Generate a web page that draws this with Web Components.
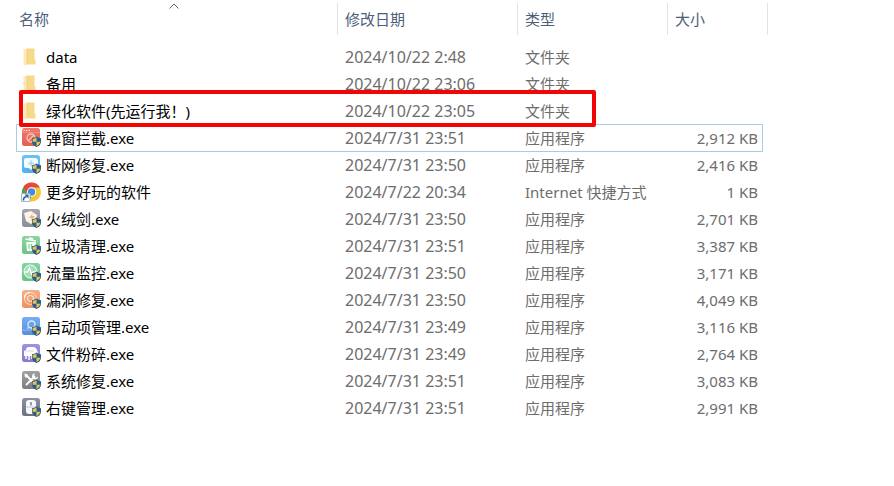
<!DOCTYPE html>
<html lang="zh-CN">
<head>
<meta charset="utf-8">
<meta name="viewport" content="width=device-width, initial-scale=1">
<title>文件列表</title>
<style>
    body {
        margin: 0;
        background: #fff;
        color: #6d6d6d;
        font: 15px/20px "Noto Sans", "Noto Sans CJK SC", sans-serif;
    }
</style>
</head>
<body>
<file-list></file-list>

<script>
const shield = `
    <path d="M10 10.200q2.500 0 4.500-1.700 2 1.700 4.500 1.700v3.300q0 3.500-4.500 5.500-4.500-2-4.500-5.500z" fill="#285f8c"/>
    <path d="M10.700 11q2 0 3.800-1.400v4.200h-3.800zM14.500 13.800h3.800q-.3 2.700-3.800 4.400z" fill="#f0c14c"/>
`;

// each tile is drawn on an 18x18 grid, the shield sits bottom right
const tiles = {
    popup: ['#ec7b6c', '#e26154', `
        <path d="M0 4.500h18" stroke="#f29a8b" stroke-width=".7"/>
        <path d="M1.500 2.500h1.200M4 2.500h1.200M6.500 2.500h1.200" stroke="#fff"/>
        <circle cx="9" cy="10" r="4" fill="none" stroke="#ffc3ba" stroke-width="1.300"/>
        <path d="M6.200 12.800l5.600-5.600" stroke="#ffc3ba" stroke-width="1.300"/>`],
    network: ['#6bc3f7', '#4eb0ef', `
        <path d="M4 3h9q3 0 3 3v4q0 3-3 3h-2l-2 2-2-2H4q-2 0-2-2V5q0-2 2-2z" fill="#f5fbff"/>
        <path d="M6 8.500h6M9 5.500v6" stroke="#a4d9f7" stroke-width="1.500"/>`],
    sword: ['#a5a5ad', '#8e8e96', `
        <path d="M2 4l7-2 6 4-1 6-5 3-5-3z" fill="#f8f4ef"/>
        <path d="M11 4L7 9h3l-2 4 5-6h-3z" fill="#f1b36d"/>`],
    trash: ['#8bd5a0', '#6cc389', `
        <path d="M4 6h10l-1 9H5z" fill="#effff3"/>
        <path d="M3.500 3L14 5M7 2l4 .8" stroke="#fff" stroke-width="1.400"/>
        <path d="M7 8v5M9.500 8v5" stroke="#74c48d"/>`],
    traffic: ['#83d3a0', '#69c48c', `
        <circle cx="8.500" cy="8.500" r="6.500" fill="#a3deb8" stroke="#effff3"/>
        <path d="M2 9h3.500l2-4 2 6 1.500-2H15" fill="none" stroke="#fff" stroke-width="1.400"/>`],
    leak: ['#f6b084', '#ed9062', `
        <circle cx="8.500" cy="8.500" r="6" fill="none" stroke="#ffe0cb"/>
        <circle cx="8.500" cy="8.500" r="3" fill="none" stroke="#ffe0cb" stroke-width="1.200"/>
        <path d="M2.500 8q0-5.500 5.500-5.500" fill="none" stroke="#fff" stroke-width="1.200"/>`],
    startup: ['#78adf0', '#588fdb', `
        <path d="M0 13q7 1 12-1" fill="none" stroke="#8dbaf4"/>
        <circle cx="9.500" cy="7.500" r="3.500" fill="none" stroke="#d9eaff" stroke-width="1.400"/>
        <path d="M6.500 10.500l-1.500 1" stroke="#d9eaff" stroke-width="1.400"/>`],
    shred: ['#9e93e1', '#8579d0', `
        <path d="M4 6q0-3 3-3h4q3 0 4 3l1 3v3H2V7z" fill="#fff"/>
        <path d="M4 11v4M7 11v5M10 11v4" stroke="#fff" stroke-width="1.500"/>
        <path d="M3 7h9" stroke="#cfc8f3" stroke-width=".8"/>`],
    repair: ['#a0a0a2', '#7f7f83', `
        <path d="M5 5l8 8M13 5l-9 9" stroke="#fff" stroke-width="1.800"/>
        <path d="M2.500 2.500l3 .8.8 2-1.500 1.500-2-.8z" fill="#fff"/>
        <path d="M13 2.500a3 3 0 1 0 3 3L13.500 7 11.500 5z" fill="#fff"/>`],
    mouse: ['#8c92a3', '#6c7284', `
        <rect x="4" y="2" width="10" height="14" rx="3" fill="#f7f8fc"/>
        <path d="M4 9h10" stroke="#b3b7c3" stroke-width=".8"/>
        <path d="M9 4v3.500" stroke="#777e90" stroke-width="1.500"/>`]
};

const pictures = {
    folder: `<svg viewBox="0 0 20 20">
        <path d="M5 1.500h8.500v11l1 .5v4.500H5z" fill="#f6d98a"/>
        <path d="M2.500 1.500L6 3.500v13l-1 2.500-2.500-1.500z" fill="#ffe9ae"/>
        <path d="M6 3.500v13" stroke="#e9c778" stroke-width=".6"/>
    </svg>`,
    chrome: `<svg viewBox="0 0 20 20">
        <circle cx="10.500" cy="10" r="9.500" fill="#f5c735"/>
        <path d="M2.300 5.200a9.500 9.500 0 0 1 16.500.3H10.500l-4.200 7z" fill="#e34a3c"/>
        <path d="M2.300 5.200L6.500 12.500l4 2-2.500 4.800A9.500 9.500 0 0 1 2.300 5.200z" fill="#38a65a"/>
        <circle cx="10.500" cy="10" r="4.700" fill="#fff"/>
        <circle cx="10.500" cy="10" r="3.700" fill="#4389e5"/>
        <path d="M.5 11.500h8.500v8H.5z" fill="#f9fcff" stroke="#8fa9bd" stroke-width=".8"/>
        <path d="M2.500 18.500q-.5-3 3-4" fill="none" stroke="#245d94" stroke-width="1.500"/>
        <path d="M3.500 12.500h4v4z" fill="#245d94"/>
    </svg>`
};

class FileIcon extends HTMLElement {
    constructor() {
        super();
        this.attachShadow({ mode: 'open' });
    }
    connectedCallback() {
        const kind = this.getAttribute('kind');
        this.shadowRoot.innerHTML = `
            <style>
                :host {
                    display: block;
                    flex: none;
                    width: 20px;
                    height: 20px;
                }
                svg {
                    display: block;
                    width: 100%;
                    height: 100%;
                }
            </style>
            ${pictures[kind] || this.tile(kind)}
        `;
    }
    tile(kind) {
        const [top, bottom, art] = tiles[kind];
        return `<svg viewBox="-1 0 20 20">
            <linearGradient id="bg" x2="0" y2="1">
                <stop stop-color="${top}"/>
                <stop offset="1" stop-color="${bottom}"/>
            </linearGradient>
            <rect width="18" height="18" rx="2.500" fill="url(#bg)"/>
            ${art}
            ${shield}
        </svg>`;
    }
}
customElements.define('file-icon', FileIcon);

const columnTitleTemplate = document.createElement('template');

columnTitleTemplate.innerHTML = `
    <style>
        :host {
            display: block;
            position: relative;
        }
        button {
            display: block;
            width: 100%;
            height: 32px;
            padding: 0 0 0 7px;
            border: 0;
            background: none;
            color: #4c607a;
            font: inherit;
            text-align: left;
        }
        :host([sorted]) button {
            padding-left: 9px;
        }
        svg {
            display: none;
            position: absolute;
            top: 0;
            left: 50%;
            margin-left: -5px;
        }
        :host([sorted]) svg {
            display: block;
        }
    </style>
    <button type="button"><slot></slot></button>
    <svg width="10" height="6" viewBox="0 0 10 6">
        <path d="M.5 5.500L5 1l4.500 4.500" fill="none" stroke="#666"/>
    </svg>
`;

class ColumnTitle extends HTMLElement {
    constructor() {
        super();
        const shadowRoot = this.attachShadow({ mode: 'open' });
        shadowRoot.appendChild(columnTitleTemplate.content.cloneNode(true));
    }
}
customElements.define('column-title', ColumnTitle);

const files = [
    ['folder', 'data', '2024/10/22 2:48', '文件夹', ''],
    ['folder', '备用', '2024/10/22 23:06', '文件夹', ''],
    ['folder', '绿化软件(先运行我！)', '2024/10/22 23:05', '文件夹', '', 'marked'],
    ['popup', '弹窗拦截.exe', '2024/7/31 23:51', '应用程序', '2,912 KB', 'focused'],
    ['network', '断网修复.exe', '2024/7/31 23:50', '应用程序', '2,416 KB'],
    ['chrome', '更多好玩的软件', '2024/7/22 20:34', 'Internet 快捷方式', '1 KB'],
    ['sword', '火绒剑.exe', '2024/7/31 23:50', '应用程序', '2,701 KB'],
    ['trash', '垃圾清理.exe', '2024/7/31 23:51', '应用程序', '3,387 KB'],
    ['traffic', '流量监控.exe', '2024/7/31 23:50', '应用程序', '3,171 KB'],
    ['leak', '漏洞修复.exe', '2024/7/31 23:50', '应用程序', '4,049 KB'],
    ['startup', '启动项管理.exe', '2024/7/31 23:49', '应用程序', '3,116 KB'],
    ['shred', '文件粉碎.exe', '2024/7/31 23:49', '应用程序', '2,764 KB'],
    ['repair', '系统修复.exe', '2024/7/31 23:51', '应用程序', '3,083 KB'],
    ['mouse', '右键管理.exe', '2024/7/31 23:51', '应用程序', '2,991 KB']
];

const fileListTemplate = document.createElement('template');

fileListTemplate.innerHTML = `
    <style>
        :host {
            display: block;
            padding: 3px 126px 24px 10px;
        }
        table {
            width: 100%;
            border-collapse: separate;
            border-spacing: 0;
            table-layout: fixed;
        }
        th {
            padding: 0;
            border-right: 1px solid #e2e2e2;
            font-weight: 400;
        }
        .date {
            width: 179px;
        }
        .type {
            width: 149px;
        }
        .size {
            width: 99px;
        }
        thead::after {
            content: '';
            display: table-row;
            height: 8px;
        }
        tbody tr {
            position: relative;
        }
        td {
            height: 27px;
            padding: 0 0 0 7px;
            white-space: nowrap;
        }
        td:first-child {
            padding-left: 11px;
        }
        td:nth-child(2) {
            font-size: 16px;
        }
        td:last-child {
            padding-right: 10px;
            text-align: right;
        }
        .name {
            display: flex;
            align-items: center;
            gap: 5px;
            color: #000;
        }
        /* both frames span the whole row, not the cell they hang on */
        .focused td:first-child::after {
            content: '';
            position: absolute;
            inset: 0 5px -1px 6px;
            border: 1px solid #a9cce3;
            pointer-events: none;
        }
        .marked td:first-child::after {
            content: '';
            position: absolute;
            z-index: 1;
            inset: -7px 172px -3px 9px;
            border: 4px solid #f20505;
            border-radius: 2px;
            pointer-events: none;
        }
    </style>
    <table>
        <thead>
            <tr>
                <th aria-sort="ascending"><column-title sorted>名称</column-title></th>
                <th class="date"><column-title>修改日期</column-title></th>
                <th class="type"><column-title>类型</column-title></th>
                <th class="size"><column-title>大小</column-title></th>
            </tr>
        </thead>
        <tbody></tbody>
    </table>
`;

class FileList extends HTMLElement {
    constructor() {
        super();
        const shadowRoot = this.attachShadow({ mode: 'open' });
        shadowRoot.appendChild(fileListTemplate.content.cloneNode(true));
    }
    connectedCallback() {
        this.shadowRoot.querySelector('tbody').innerHTML = files.map(([icon, name, date, type, size, state = '']) => `
            <tr class="${state}">
                <td><div class="name"><file-icon kind="${icon}"></file-icon><span>${name}</span></div></td>
                <td>${date}</td>
                <td>${type}</td>
                <td>${size}</td>
            </tr>
        `).join('');
    }
}
customElements.define('file-list', FileList);
</script>
</body>
</html>
